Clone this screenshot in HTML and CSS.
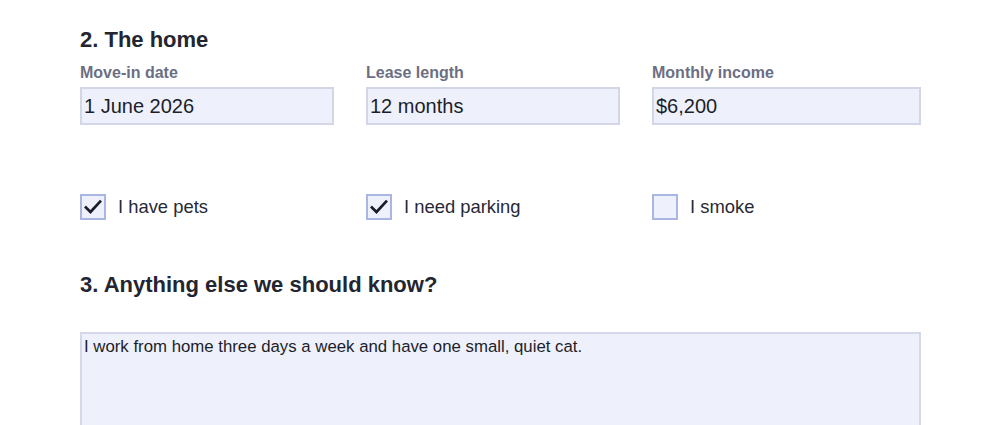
FILE: index.html
```html
<!DOCTYPE html>
<html>
<head>
<meta charset="utf-8">
<link rel="stylesheet" href="styles.css">
</head>
<body>
<main class="page">
  <h2 class="section-title">2. The home</h2>
  <div class="fields">
    <div class="field">
      <label class="field-label">Move-in date</label>
      <div class="input">1 June 2026</div>
    </div>
    <div class="field">
      <label class="field-label">Lease length</label>
      <div class="input">12 months</div>
    </div>
    <div class="field">
      <label class="field-label">Monthly income</label>
      <div class="input">$6,200</div>
    </div>
  </div>
  <div class="checks">
    <div class="check">
      <span class="box checked"><svg viewBox="0 0 24 24" width="20" height="20"><path d="M3.5 12.5 L9 18 L20.5 5.5" fill="none" stroke="#1a1c2b" stroke-width="3.2" stroke-linecap="square"/></svg></span>
      <span class="check-label">I have pets</span>
    </div>
    <div class="check">
      <span class="box checked"><svg viewBox="0 0 24 24" width="20" height="20"><path d="M3.5 12.5 L9 18 L20.5 5.5" fill="none" stroke="#1a1c2b" stroke-width="3.2" stroke-linecap="square"/></svg></span>
      <span class="check-label">I need parking</span>
    </div>
    <div class="check">
      <span class="box"></span>
      <span class="check-label">I smoke</span>
    </div>
  </div>
  <h2 class="section-title second">3. Anything else we should know?</h2>
  <div class="textarea">I work from home three days a week and have one small, quiet cat.</div>
</main>
</body>
</html>
```
FILE: styles.css
```css
html, body {
  margin: 0;
  padding: 0;
  background: #ffffff;
}
body {
  font-family: "Liberation Sans", Arial, sans-serif;
  color: #1f2130;
}
.page {
  padding: 27px 80px 0 80px;
}
.section-title {
  margin: 0;
  font-size: 22px;
  line-height: 26px;
  font-weight: 700;
  color: #23252f;
}
.fields {
  display: grid;
  grid-template-columns: 254px 254px 269px;
  column-gap: 32px;
  margin-top: 11px;
}
.field {
  display: flex;
  flex-direction: column;
}
.field-label {
  font-size: 16px;
  line-height: 18px;
  font-weight: 700;
  color: #6c6f83;
  margin-bottom: 5px;
}
.input {
  box-sizing: border-box;
  height: 38px;
  border: 2px solid #d2d6e6;
  background: #eef1fb;
  font-size: 20px;
  line-height: 34px;
  padding: 0 2px;
  color: #1c1e2a;
}
.checks {
  display: grid;
  grid-template-columns: 254px 254px 269px;
  column-gap: 32px;
  margin-top: 69px;
}
.check {
  display: flex;
  align-items: center;
  gap: 12px;
}
.box {
  box-sizing: border-box;
  width: 26px;
  height: 26px;
  border: 2px solid #aab6e2;
  background: #eef1fb;
  display: flex;
  align-items: center;
  justify-content: center;
}
.check-label {
  font-size: 18.4px;
  color: #272935;
}
.section-title.second {
  margin-top: 52px;
}
.textarea {
  box-sizing: border-box;
  margin-top: 34px;
  width: 841px;
  height: 120px;
  border: 2px solid #d4d8e8;
  background: #eef1fb;
  font-size: 16.8px;
  line-height: 22px;
  padding: 2px 2px;
  color: #1c1e2a;
}
```
